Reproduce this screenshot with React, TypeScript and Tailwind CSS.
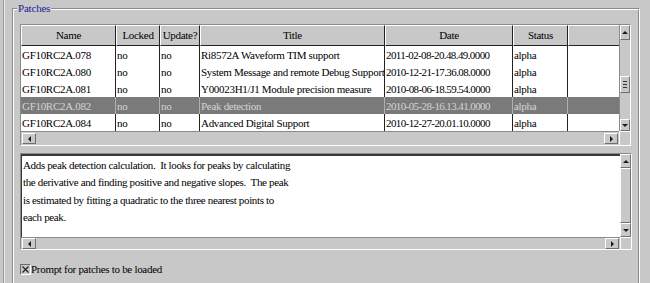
import type { ReactNode } from 'react';

const rows = [
  ['GF10RC2A.078', 'no', 'no', 'Ri8572A Waveform TIM support', '2011-02-08-20.48.49.0000', 'alpha'],
  ['GF10RC2A.080', 'no', 'no', 'System Message and remote Debug Support', '2010-12-21-17.36.08.0000', 'alpha'],
  ['GF10RC2A.081', 'no', 'no', 'Y00023H1/J1 Module precision measure', '2010-08-06-18.59.54.0000', 'alpha'],
  ['GF10RC2A.082', 'no', 'no', 'Peak detection', '2010-05-28-16.13.41.0000', 'alpha'],
  ['GF10RC2A.084', 'no', 'no', 'Advanced Digital Support', '2010-12-27-20.01.10.0000', 'alpha'],
];

const headers = ['Name', 'Locked', 'Update?', 'Title', 'Date', 'Status'];
const widths = ['w-[95px]', 'w-[44px]', 'w-[40px]', 'w-[185px]', 'w-[128px]', 'w-[55px]'];

const raised = 'border border-t-white border-l-white border-r-[#707070] border-b-[#707070]';
const sunken = 'border border-t-[#8a8a8a] border-l-[#8a8a8a] border-r-white border-b-white';

function Arrow({ dir }: { dir: 'up' | 'down' | 'left' | 'right' }) {
  const pts = {
    up: '0,4 3,1 6,4',
    down: '0,1 6,1 3,4',
    left: '4,0 4,6 1,3',
    right: '1,0 1,6 4,3',
  }[dir];
  const horiz = dir === 'left' || dir === 'right';
  return (
    <svg width={horiz ? 5 : 6} height={horiz ? 6 : 5} viewBox={horiz ? '0 0 5 6' : '0 0 6 5'}>
      <polygon points={pts} fill="#1a1a1a" />
    </svg>
  );
}

function ScrollBtn({ dir, className }: { dir: 'up' | 'down' | 'left' | 'right'; className: string }) {
  return (
    <div className={`${raised} ${className} bg-[#c8c8c8] flex items-center justify-center shrink-0`}>
      <Arrow dir={dir} />
    </div>
  );
}

function HScroll({ children }: { children?: ReactNode }) {
  return (
    <div className="flex items-center justify-between h-full border-t border-t-[#8a8a8a] px-[1px] bg-[#c8c8c8]">
      {children}
      <ScrollBtn dir="left" className="w-[14px] h-[11px]" />
      <ScrollBtn dir="right" className="w-[14px] h-[11px]" />
    </div>
  );
}

export default function App() {
  return (
    <div className="w-[650px] h-[283px] overflow-hidden bg-[#c8c8c8] pl-[3px] text-[11px] text-black font-['Liberation_Serif','DejaVu_Serif',serif]">
      <div className="h-full border-l border-l-[#9a9a9a]">
        <div className="h-full border-l border-l-[#ececec] pl-[7px] pt-[8px] pr-[10px]">
          {/* Patches group */}
          <div className="relative h-[300px] border border-t-[#8a8a8a] border-l-[#8a8a8a] border-r-white border-b-white">
            <span className="absolute left-[4px] top-[-8px] px-[1px] bg-[#c8c8c8] text-[#1c1c96] leading-[15px] tracking-[-0.2px]">
              Patches
            </span>
            <div className="h-full border border-t-white border-l-white border-r-[#8a8a8a] border-b-[#8a8a8a] pl-[6px] pt-[14px]">
              {/* Table */}
              <div className={`${sunken} w-[611px]`}>
                <div className="flex">
                  <div className="w-[598px]">
                    <div className="flex h-[21px] bg-[#c8c8c8]">
                      {headers.map((h, i) => (
                        <div
                          key={h}
                          className={`${widths[i]} shrink-0 flex items-center justify-center border-t border-l border-t-white border-l-white border-r border-r-[#222] border-b border-b-[#222] tracking-[-0.3px]`}
                        >
                          {h}
                        </div>
                      ))}
                      <div className="flex-1 border-t border-l border-t-white border-l-white border-b border-b-[#222]" />
                    </div>
                    {rows.map((r, ri) => {
                      const sel = ri === 3;
                      return (
                        <div
                          key={r[0]}
                          className={`flex h-[17px] ${sel ? 'bg-[#7a7a7a] text-[#d4d4d4]' : 'bg-white text-black'}`}
                        >
                          {r.map((c, ci) => (
                            <div
                              key={ci}
                              className={`${widths[ci]} shrink-0 border-r ${sel ? 'border-r-[#b0b0b0]' : 'border-r-[#222]'} pl-[1px] pt-[2px] leading-[15px] whitespace-nowrap overflow-hidden ${ci === 4 ? 'tracking-[-0.6px]' : 'tracking-[-0.3px]'}`}
                            >
                              {c}
                            </div>
                          ))}
                          <div className="flex-1" />
                        </div>
                      );
                    })}
                  </div>
                  {/* vertical scrollbar */}
                  <div className="w-[11px] flex flex-col border-l border-l-[#8a8a8a] bg-[#c8c8c8]">
                    <ScrollBtn dir="up" className="w-[10px] h-[15px]" />
                    <div className="flex-1 flex flex-col justify-center pt-[26px] pb-[16px]">
                      <div className={`${raised} h-[17px] flex flex-col items-center justify-center gap-[2px] bg-[#c8c8c8]`}>
                        <div className="w-[4px] h-[1px] bg-[#333]" />
                        <div className="w-[4px] h-[1px] bg-[#333]" />
                        <div className="w-[4px] h-[1px] bg-[#333]" />
                      </div>
                    </div>
                    <ScrollBtn dir="down" className="w-[10px] h-[12px]" />
                  </div>
                </div>
                <div className="flex h-[14px]">
                  <div className="w-[598px]">
                    <HScroll />
                  </div>
                  <div className="w-[11px] border-t border-l border-t-white border-l-white" />
                </div>
              </div>

              {/* Description */}
              <div className={`${sunken} w-[612px] mt-[7px]`}>
                <div className="flex">
                  <div className="w-[599px] h-[83px] bg-white border-t-2 border-l border-t-[#3a3a3a] border-l-[#3a3a3a] pl-[1px] pt-[1px] leading-[17.3px] whitespace-pre tracking-[-0.35px]">
                    {'Adds peak detection calculation.  It looks for peaks by calculating\nthe derivative and finding positive and negative slopes.  The peak\nis estimated by fitting a quadratic to the three nearest points to\neach peak.'}
                  </div>
                  <div className="w-[11px] flex flex-col bg-[#c8c8c8]">
                    <ScrollBtn dir="up" className="w-[11px] h-[14px]" />
                    <div className={`${raised} flex-1 border-l-[#e8e8e8]`} />
                    <ScrollBtn dir="down" className="w-[11px] h-[14px]" />
                  </div>
                </div>
                <div className="flex h-[12px]">
                  <div className="w-[599px]">
                    <HScroll />
                  </div>
                  <div className="w-[11px] border-t border-l border-t-white border-l-white" />
                </div>
              </div>

              {/* Checkbox */}
              <div className="flex items-center mt-[14px] h-[11px]">
                <div className="w-[11px] h-[11px] border border-t-[#6a6a6a] border-l-[#6a6a6a] border-r-white border-b-white bg-[#c8c8c8] flex items-center justify-center shrink-0">
                  <svg width="7" height="7" viewBox="0 0 7 7">
                    <path d="M0.5 0.5 L6.5 6.5 M6.5 0.5 L0.5 6.5" stroke="#222" strokeWidth="1.2" />
                  </svg>
                </div>
                <span className="leading-[11px] tracking-[-0.3px]">Prompt for patches to be loaded</span>
              </div>
            </div>
          </div>
        </div>
      </div>
    </div>
  );
}
